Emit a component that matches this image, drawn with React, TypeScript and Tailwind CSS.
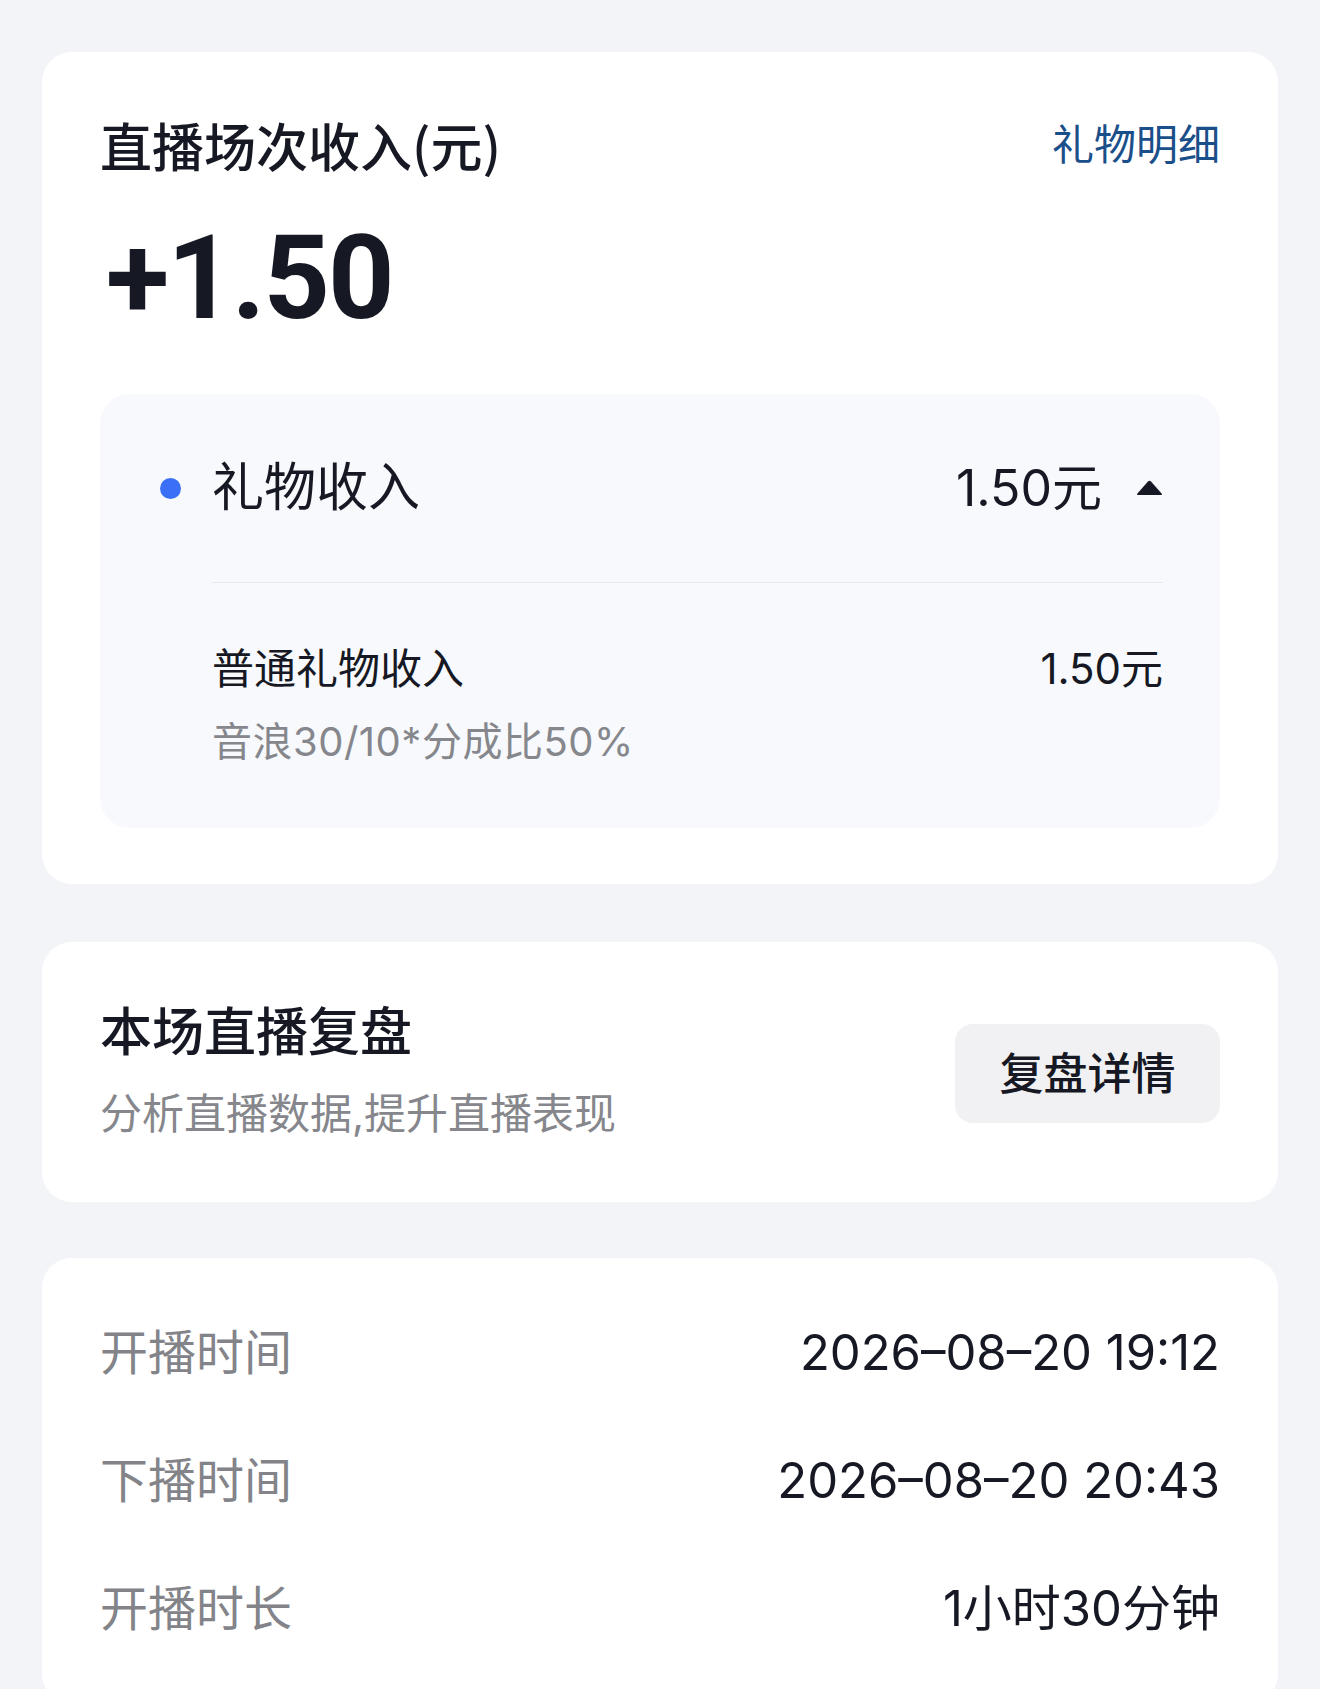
import React from "react";

const FONT = "font-['Inter','Noto_Sans_CJK_SC',sans-serif]";

function InfoRow({ label, value }: { label: string; value: string }) {
  return (
    <div className="flex h-[128px] items-center justify-between">
      <span className="text-[48px] leading-[60px] text-[#838489]">{label}</span>
      <span className="text-[49px] leading-[60px] text-[#161823]">{value}</span>
    </div>
  );
}

export default function App() {
  return (
    <div className={`${FONT} min-h-[1689px] bg-[#f3f4f8] px-[42px] pt-[52px] pb-[40px]`}>
      {/* Income card */}
      <div className="rounded-[30px] bg-white px-[58px] pt-[63px] pb-[56px]">
        <div className="flex items-center justify-between">
          <span className="font-['Noto_Sans_CJK_SC',sans-serif] text-[52px] font-medium leading-[60px] text-[#161823]">直播场次收入(元)</span>
          <span className="text-[42px] leading-[60px] text-[#1b4f8a]">礼物明细</span>
        </div>
        <div className="mt-[38px] ml-[6px] font-['Roboto',sans-serif] text-[116px] font-bold leading-[130px] tracking-[-2px] text-[#161823]">
          +1.50
        </div>
        <div className="mt-[51px] rounded-[30px] bg-[#f7f9fc] pl-[60px] pr-[57px]">
          <div className="flex h-[188px] items-center">
            <span className="h-[21px] w-[21px] shrink-0 rounded-full bg-[#3b6ff6]" />
            <span className="ml-[31px] text-[52px] leading-[60px] text-[#161823]">礼物收入</span>
            <span className="ml-auto text-[50px] leading-[60px] text-[#161823]">1.50元</span>
            <svg className="ml-[34px]" width="27" height="16" viewBox="0 0 27 16">
              <path d="M12 1.6 Q13.5 0 15 1.6 L25.6 13.4 Q26.6 15 24.6 15 L2.4 15 Q0.4 15 1.4 13.4 Z" fill="#161823" />
            </svg>
          </div>
          <div className="ml-[52px] border-t border-[#e6e9ed] pt-[61px] pb-[61px]">
            <div className="flex items-center justify-between">
              <span className="text-[42px] leading-[50px] text-[#161823]">普通礼物收入</span>
              <span className="text-[42px] leading-[50px] text-[#161823]">1.50元</span>
            </div>
            <div className="mt-[23px] text-[40px] leading-[50px] tracking-[0.5px] text-[#86878c]">音浪30/10*分成比50%</div>
          </div>
        </div>
      </div>

      {/* Review card */}
      <div className="mt-[58px] flex items-center justify-between rounded-[30px] bg-white px-[58px] pt-[61px] pb-[58px]">
        <div className="flex flex-col">
          <span className="text-[52px] font-medium leading-[60px] text-[#161823]">本场直播复盘</span>
          <span className="mt-[21px] text-[42px] leading-[60px] text-[#86878c]">分析直播数据,提升直播表现</span>
        </div>
        <button className="flex h-[99px] w-[265px] items-center justify-center rounded-[18px] bg-[#f1f1f4] text-[44px] font-medium text-[#161823]">
          复盘详情
        </button>
      </div>

      {/* Time card */}
      <div className="mt-[56px] rounded-[30px] bg-white px-[58px] pt-[31px] pb-[31px]">
        <InfoRow label="开播时间" value="2026–08–20 19:12" />
        <InfoRow label="下播时间" value="2026–08–20 20:43" />
        <InfoRow label="开播时长" value="1小时30分钟" />
      </div>
    </div>
  );
}
